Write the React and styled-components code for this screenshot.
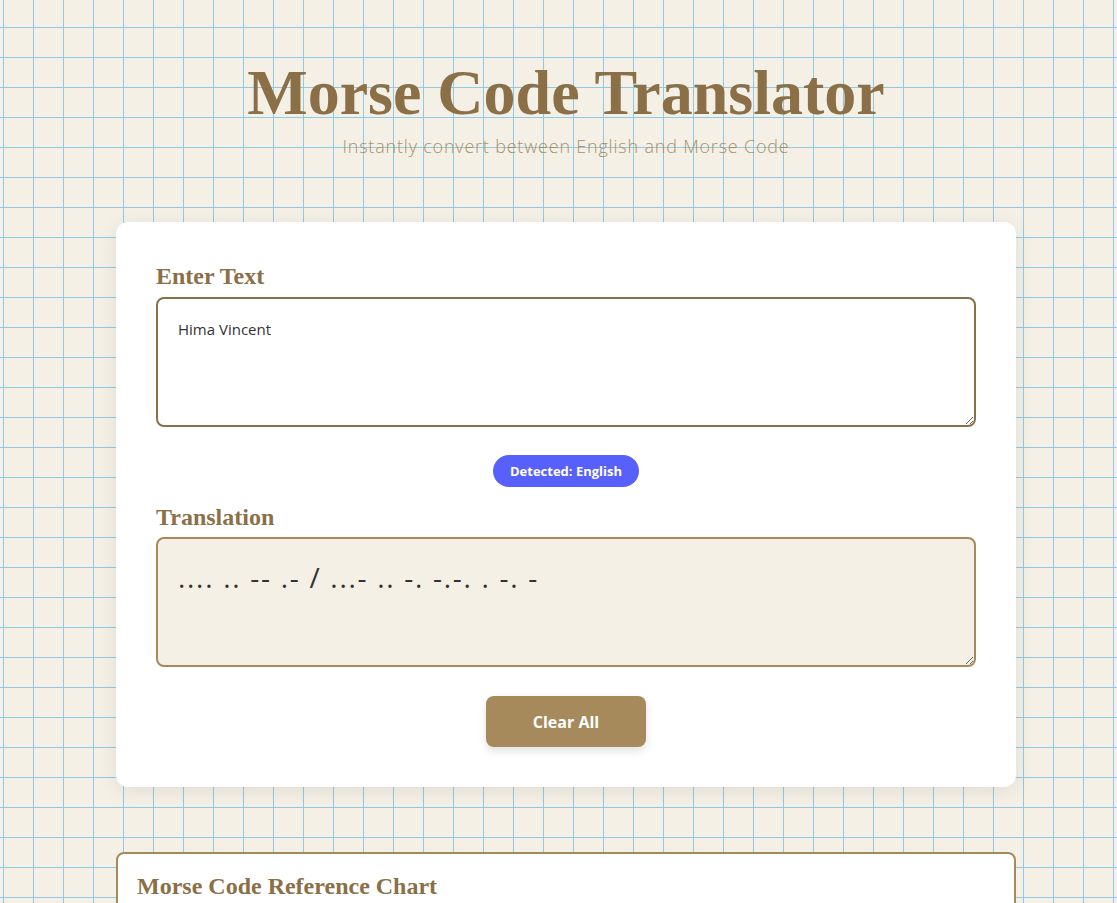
import React, { useState } from 'react';
import styled, { createGlobalStyle } from 'styled-components';

const MORSE = {
  A: '.-', B: '-...', C: '-.-.', D: '-..', E: '.', F: '..-.', G: '--.', H: '....',
  I: '..', J: '.---', K: '-.-', L: '.-..', M: '--', N: '-.', O: '---', P: '.--.',
  Q: '--.-', R: '.-.', S: '...', T: '-', U: '..-', V: '...-', W: '.--', X: '-..-',
  Y: '-.--', Z: '--..',
};

const toMorse = (text) =>
  text
    .toUpperCase()
    .split(' ')
    .map((word) => word.split('').map((c) => MORSE[c] || '').join(' '))
    .join(' / ');

const App = () => {
  const [text, setText] = useState('Hima Vincent');

  return (
    <>
      <GlobalStyle />
      <Page>
        <Header>
          <Title>Morse Code Translator</Title>
          <Subtitle>Instantly convert between English and Morse Code</Subtitle>
        </Header>

        <Card>
          <Label>Enter Text</Label>
          <TextBox value={text} onChange={(e) => setText(e.target.value)} />
          <BadgeRow>
            <Badge>Detected: English</Badge>
          </BadgeRow>
          <Label>Translation</Label>
          <TextBox $output readOnly value={toMorse(text)} />
          <ButtonRow>
            <ClearButton onClick={() => setText('')}>Clear All</ClearButton>
          </ButtonRow>
        </Card>

        <ChartCard>
          <ChartTitle>Morse Code Reference Chart</ChartTitle>
          <ChartGrid>
            {Object.entries(MORSE).map(([letter, code]) => (
              <ChartItem key={letter}>
                <strong>{letter}</strong>
                <span>{code}</span>
              </ChartItem>
            ))}
          </ChartGrid>
        </ChartCard>
      </Page>
    </>
  );
};

export default App;

const GlobalStyle = createGlobalStyle`
  body {
    margin: 0;
    background-color: #f5f0e6;
    background-image:
      linear-gradient(to right, #8ecae6 1px, transparent 1px),
      linear-gradient(to bottom, #8ecae6 1px, transparent 1px);
    background-size: 30px 30px;
    background-position: 3px 27px;
    font-family: 'Open Sans', 'Liberation Sans', sans-serif;
  }
`;

const Page = styled.div`
  padding: 55px 0 60px 15px;
`;

const Header = styled.header`
  text-align: center;
  margin-bottom: 62px;
`;

const Title = styled.h1`
  margin: 0;
  font-family: 'Liberation Serif', serif;
  font-weight: 700;
  font-size: 64px;
  line-height: 1.2;
  color: #8b6f47;
`;

const Subtitle = styled.p`
  margin: 1px 0 0;
  font-size: 18px;
  font-weight: 300;
  letter-spacing: 0.8px;
  line-height: 1.5;
  color: #a68a5b;
  opacity: 0.92;
`;

const Card = styled.section`
  width: 900px;
  margin: 0 auto;
  box-sizing: border-box;
  padding: 40px;
  background: #ffffff;
  border-radius: 12px;
  box-shadow: 0 4px 20px rgba(0, 0, 0, 0.08);
`;

const Label = styled.h2`
  margin: 0 0 6px;
  font-family: 'Liberation Serif', serif;
  font-weight: 700;
  font-size: 24px;
  line-height: 1.2;
  color: #8b6f47;
`;

const TextBox = styled.textarea`
  display: block;
  width: 100%;
  height: 130px;
  box-sizing: border-box;
  padding: 20px;
  border: 2px solid ${(p) => (p.$output ? '#a68a5b' : '#8b6f47')};
  border-radius: 8px;
  background: ${(p) => (p.$output ? '#f5f0e5' : '#ffffff')};
  color: #333333;
  font-family: 'Open Sans', 'Liberation Sans', sans-serif;
  font-size: ${(p) => (p.$output ? '28px' : '15px')};
  letter-spacing: ${(p) => (p.$output ? '1.7px' : 'normal')};
  line-height: ${(p) => (p.$output ? '1.3' : '1.4')};
  outline: none;
`;

const BadgeRow = styled.div`
  display: flex;
  justify-content: center;
  margin: 28px 0 16px;
`;

const Badge = styled.span`
  display: inline-flex;
  align-items: center;
  height: 32px;
  padding: 0 17px;
  border-radius: 16px;
  background: #5860fc;
  color: #ffffff;
  font-size: 13px;
  font-weight: 700;
`;

const ButtonRow = styled.div`
  display: flex;
  justify-content: center;
  margin-top: 29px;
`;

const ClearButton = styled.button`
  width: 160px;
  height: 51px;
  border: none;
  border-radius: 8px;
  background: #a68a5b;
  color: #ffffff;
  font-family: 'Open Sans', 'Liberation Sans', sans-serif;
  font-size: 16px;
  font-weight: 700;
  cursor: pointer;
  box-shadow: 0 4px 8px rgba(0, 0, 0, 0.12);
`;

const ChartCard = styled.section`
  width: 900px;
  margin: 65px auto 0;
  box-sizing: border-box;
  padding: 18px 19px 24px;
  background: #ffffff;
  border: 2px solid #a68a5b;
  border-radius: 8px;
`;

const ChartTitle = styled.h3`
  margin: 0 0 16px;
  font-family: 'Liberation Serif', serif;
  font-weight: 700;
  font-size: 24px;
  line-height: 1.2;
  color: #8b6f47;
`;

const ChartGrid = styled.div`
  display: grid;
  grid-template-columns: repeat(6, 1fr);
  gap: 10px;
`;

const ChartItem = styled.div`
  display: flex;
  justify-content: space-between;
  padding: 8px 12px;
  border-radius: 6px;
  background: #f5f0e6;
  color: #333;
  font-size: 15px;
`;
